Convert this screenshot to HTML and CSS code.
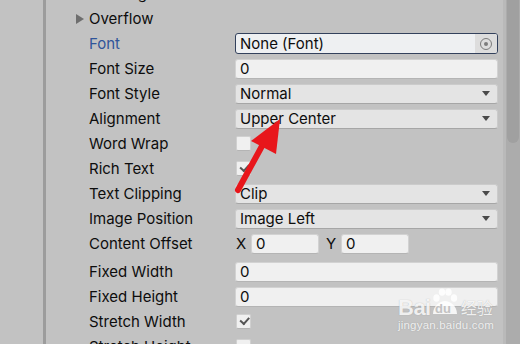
FILE: index.html
```html
<!DOCTYPE html>
<html lang="en">
<head>
    <meta charset="UTF-8">
    <title>Inspector - GUIStyle</title>
    <link rel="stylesheet" href="styles.css">
</head>
<body>
    <div class="window">
        <div class="gutter"></div>
        <div class="inspector">
            <div class="rows">
                <div class="row">
                    <span class="fold"></span><span class="label">Padding</span>
                </div>
                <div class="row">
                    <span class="fold"></span><span class="label">Overflow</span>
                </div>
                <div class="row">
                    <span class="label focused">Font</span>
                    <div class="field object">
                        <span class="value">None (Font)</span>
                        <span class="picker"><span class="picker-dot"></span></span>
                    </div>
                </div>
                <div class="row">
                    <span class="label">Font Size</span>
                    <div class="field text"><span class="value">0</span></div>
                </div>
                <div class="row">
                    <span class="label">Font Style</span>
                    <div class="field popup"><span class="value">Normal</span><span class="caret"></span></div>
                </div>
                <div class="row">
                    <span class="label">Alignment</span>
                    <div class="field popup"><span class="value">Upper Center</span><span class="caret"></span></div>
                </div>
                <div class="row">
                    <span class="label">Word Wrap</span>
                    <span class="check"></span>
                </div>
                <div class="row">
                    <span class="label">Rich Text</span>
                    <span class="check on"></span>
                </div>
                <div class="row">
                    <span class="label">Text Clipping</span>
                    <div class="field popup"><span class="value">Clip</span><span class="caret"></span></div>
                </div>
                <div class="row">
                    <span class="label">Image Position</span>
                    <div class="field popup"><span class="value">Image Left</span><span class="caret"></span></div>
                </div>
                <div class="row spaced">
                    <span class="label">Content Offset</span>
                    <div class="vector">
                        <span class="axis">X</span>
                        <div class="field text small"><span class="value">0</span></div>
                        <span class="axis y">Y</span>
                        <div class="field text small"><span class="value">0</span></div>
                    </div>
                </div>
                <div class="row">
                    <span class="label">Fixed Width</span>
                    <div class="field text"><span class="value">0</span></div>
                </div>
                <div class="row">
                    <span class="label">Fixed Height</span>
                    <div class="field text"><span class="value">0</span></div>
                </div>
                <div class="row">
                    <span class="label">Stretch Width</span>
                    <span class="check on"></span>
                </div>
                <div class="row">
                    <span class="label">Stretch Height</span>
                    <span class="check"></span>
                </div>
            </div>
        </div>
        <div class="scrollbar"><div class="thumb"></div></div>
    </div>

    <!-- annotation arrow -->
    <svg class="annotation" width="520" height="344" viewBox="0 0 520 344">
        <line x1="238" y1="190" x2="262" y2="146" stroke="#e8161b" stroke-width="6" stroke-linecap="round"/>
        <polygon points="280,119 251,141 276,154" fill="#e8161b"/>
    </svg>

    <div class="watermark">
        <div class="wm-brand">
            <span class="wm-bai">Bai</span>
            <svg class="wm-paw" width="28" height="28" viewBox="0 0 28 28">
                <ellipse cx="5.5" cy="10" rx="3.2" ry="3.8"/>
                <ellipse cx="11" cy="4.2" rx="3.2" ry="3.6"/>
                <ellipse cx="17.5" cy="4.2" rx="3.2" ry="3.6"/>
                <ellipse cx="23" cy="10" rx="3.2" ry="3.8"/>
                <path d="M2 26 C2 18 9 13 14 13 C19 13 26 18 26 26 Z"/>
            </svg>
            <span class="wm-du">du</span>
            <span class="wm-cn">经验</span>
        </div>
        <div class="wm-url">jingyan.baidu.com</div>
    </div>
</body>
</html>
```

FILE: styles.css
```css
:root {
    --bg: #c2c2c2;
    --divider: #9c9c9c;
    --text: #0d0d0d;
    --focus: #30559a;
    --field: #f0f0f0;
    --popup: #e4e4e4;
    --font-ui: 'Inter', 'Liberation Sans', sans-serif;
}

html, body {
    margin: 0;
    height: 100%;
    overflow: hidden;
}

body {
    font-family: var(--font-ui);
    font-size: 15px;
    color: var(--text);
    background: var(--bg);
    position: relative;
}

.window {
    display: flex;
    height: 344px;
}

.gutter {
    width: 43px;
    border-right: 3px solid var(--divider);
    flex: none;
}

.inspector {
    flex: 1;
    overflow: hidden;
}

.rows {
    margin-top: -19px;
}

.row {
    display: flex;
    align-items: center;
    height: 25px;
    padding-left: 43px;
}

.row.spaced {
    margin-bottom: 3px;
}

.fold {
    width: 0;
    height: 0;
    border-top: 5px solid transparent;
    border-bottom: 5px solid transparent;
    border-left: 8px solid #6e6e6e;
    margin-left: -13px;
    margin-right: 5px;
}

.label {
    width: 146px;
    flex: none;
    white-space: nowrap;
}

.label.focused {
    color: var(--focus);
}

.field {
    width: 263px;
    height: 20px;
    box-sizing: border-box;
    border-radius: 3px;
    display: flex;
    align-items: center;
    padding-left: 5px;
    flex: none;
}

.field.text {
    background: var(--field);
    border: 1px solid #d2d2d2;
    border-bottom-color: #b4b4b4;
    padding-left: 4px;
}

.field.popup {
    background: var(--popup);
    border: 1px solid #cbcbcb;
    border-bottom-color: #a6a6a6;
    padding-left: 4px;
    padding-right: 7px;
}

.field.object {
    height: 21px;
    background: #eef0f2;
    border: 1px solid #33415c;
    padding-left: 4px;
    padding-right: 0;
}

.value {
    flex: 1;
    white-space: nowrap;
}

.picker {
    width: 22px;
    height: 19px;
    background: #dddddd;
    border-radius: 0 2px 2px 0;
    display: flex;
    align-items: center;
    justify-content: center;
}

.picker-dot {
    width: 10px;
    height: 10px;
    border: 1.5px solid #7c7c7c;
    border-radius: 50%;
    position: relative;
}

.picker-dot::after {
    content: '';
    position: absolute;
    width: 4px;
    height: 4px;
    border-radius: 50%;
    background: #7c7c7c;
    left: 3px;
    top: 3px;
}

.caret {
    width: 0;
    height: 0;
    border-left: 4px solid transparent;
    border-right: 4px solid transparent;
    border-top: 5px solid #4a4a4a;
}

.check {
    width: 15px;
    height: 15px;
    box-sizing: border-box;
    background: var(--field);
    border: 1px solid #d0d0d0;
    border-bottom-color: #b4b4b4;
    border-radius: 2px;
    margin-left: 1px;
    position: relative;
}

.check.on::after {
    content: '';
    position: absolute;
    left: 3px;
    top: 2px;
    width: 7px;
    height: 3.5px;
    border-left: 2px solid #555;
    border-bottom: 2px solid #555;
    transform: rotate(-48deg);
}

.vector {
    display: flex;
    align-items: center;
}

.axis {
    width: 15px;
    padding-left: 1px;
}

.axis.y {
    width: 15px;
    padding-left: 0;
    margin-left: 7px;
}

.field.small {
    width: 68px;
}

.scrollbar {
    width: 14px;
    flex: none;
    background: #acacac;
    border-left: 3px solid #b9b9b9;
    position: relative;
}

.thumb {
    position: absolute;
    left: 1px;
    right: 1px;
    top: -6px;
    height: 149px;
    border-radius: 6px;
    background: #a0a0a0;
}

.annotation {
    position: absolute;
    left: 0;
    top: 0;
    pointer-events: none;
}

.watermark {
    position: absolute;
    left: 398px;
    top: 286px;
    color: rgba(255, 255, 255, 0.85);
    text-shadow: 0 0 1px rgba(120, 120, 120, 0.5);
    font-family: 'Liberation Sans', sans-serif;
}

.wm-brand {
    display: flex;
    align-items: flex-end;
    height: 33px;
    position: relative;
}

.wm-bai {
    font-size: 22px;
    font-weight: bold;
    letter-spacing: -0.5px;
    line-height: 22px;
}

.wm-paw {
    fill: rgba(255, 255, 255, 0.85);
    margin-left: 0;
    margin-bottom: 3px;
}

.wm-du {
    position: absolute;
    left: 37px;
    bottom: 3px;
    font-size: 13px;
    font-weight: bold;
    color: #c2c2c2;
    text-shadow: none;
}

.wm-cn {
    font-family: 'Noto Sans CJK SC', sans-serif;
    font-size: 16px;
    line-height: 18px;
    margin-left: 2px;
    margin-bottom: 3px;
}

.wm-url {
    font-size: 11.5px;
    margin-top: 0;
    letter-spacing: 0.2px;
}
```
